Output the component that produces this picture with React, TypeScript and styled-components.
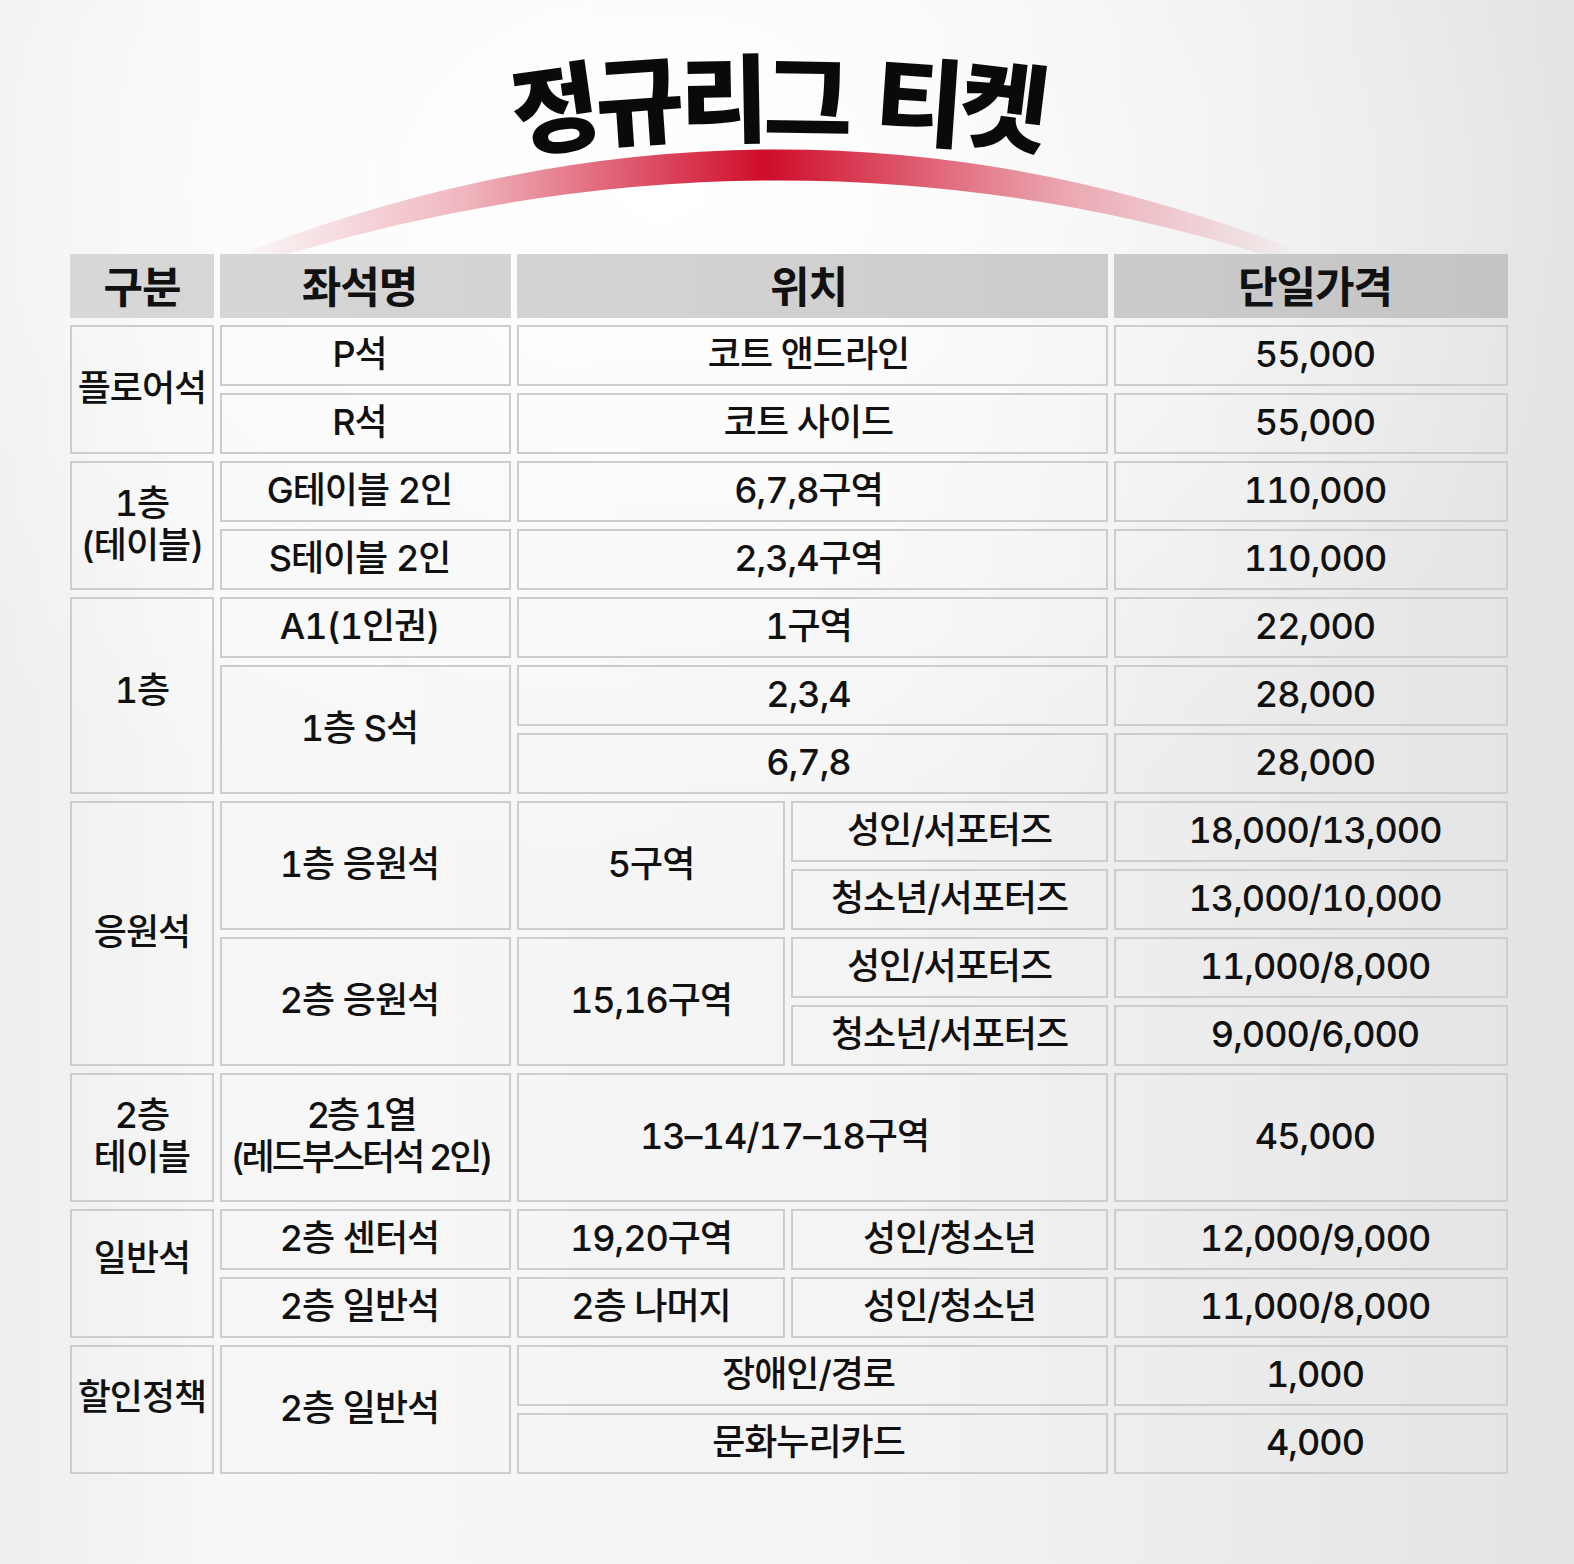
import React from "react";
import styled, { createGlobalStyle } from "styled-components";

const GlobalStyle = createGlobalStyle`
  html, body {
    margin: 0;
    padding: 0;
  }
  body {
    font-family: Inter, "Noto Sans CJK KR", sans-serif;
    color: #111;
  }
`;

const Page = styled.div`
  width: 1574px;
  min-height: 1564px;
  box-sizing: border-box;
  padding-bottom: 90px;
  background:
    radial-gradient(ellipse 60% 45% at 42% 12%, #ffffff 0%, rgba(255, 255, 255, 0) 100%),
    linear-gradient(90deg, #eeeeee 0%, #f7f7f7 14%, #f4f4f4 55%, #e3e3e3 100%);
`;

const Hero = styled.header`
  position: relative;
  height: 254px;
  display: flex;
  justify-content: center;
  padding-right: 18px;
  box-sizing: border-box;
`;

const Arc = styled.svg`
  position: absolute;
  left: 0;
  top: 0;
  width: 1574px;
  height: 254px;
`;

const Title = styled.h1`
  position: relative;
  margin: 46px 0 0;
  display: flex;
  align-items: flex-start;
  font-family: "Noto Sans CJK KR", sans-serif;
  font-size: 96px;
  font-weight: 900;
  line-height: 1;
  letter-spacing: -4px;
  color: #0a0a0a;
`;

const TitleChar = styled.span<{ $rot: number; $dy: number }>`
  display: inline-block;
  transform: translateY(${(p) => p.$dy}px) rotate(${(p) => p.$rot}deg);
`;

const Gap = styled.span`
  display: inline-block;
  width: 28px;
`;

const Table = styled.div`
  margin-left: 70px;
  display: grid;
  grid-template-columns: 144px 291px 268px 317px 394px;
  grid-template-rows: 64px repeat(17, 61px);
  column-gap: 6px;
  row-gap: 7px;
`;

// ref text sits a little off-centre in some columns
const nudge = (c: string, pr?: number) => {
  if (pr) return `padding-right: ${pr}px;`;
  if (c === "2") return "padding-right: 12px;";
  if (c === "3 / 5") return "padding-right: 8px;";
  if (c === "5") return "padding-left: 8px;";
  return "";
};

const Cell = styled.div<{ $c: string; $r: string; $shift?: number; $pr?: number; $tight?: boolean }>`
  grid-column: ${(p) => p.$c};
  grid-row: ${(p) => p.$r};
  box-sizing: border-box;
  border: 2px solid #cdcdcd;
  display: flex;
  align-items: center;
  justify-content: center;
  text-align: center;
  white-space: pre;
  font-size: 36px;
  font-weight: 500;
  line-height: 42px;
  letter-spacing: ${(p) => (p.$tight ? "-3px" : "-1px")};
  font-feature-settings: "tnum" 1;
  padding-bottom: ${(p) => (p.$shift ? `${p.$shift}px` : "4px")};
  ${(p) => nudge(p.$c, p.$pr)}
`;

const HeadCell = styled.div<{ $c: string }>`
  grid-column: ${(p) => p.$c};
  grid-row: 1;
  display: flex;
  align-items: center;
  justify-content: center;
  font-size: 43px;
  font-weight: 700;
  letter-spacing: -1px;
  padding-bottom: 4px;
  background: linear-gradient(90deg, #d8d8d8 0%, #d1d1d1 50%, #c3c3c3 100%);
  background-attachment: fixed;
  ${(p) => nudge(p.$c)}
`;

type Row = { c: string; r: string; t: string; shift?: number; pr?: number; tight?: boolean };

const rows: Row[] = [
  { c: "1", r: "2 / span 2", t: "플로어석" },
  { c: "2", r: "2", t: "P석" },
  { c: "3 / 5", r: "2", t: "코트 앤드라인" },
  { c: "5", r: "2", t: "55,000" },
  { c: "2", r: "3", t: "R석" },
  { c: "3 / 5", r: "3", t: "코트 사이드" },
  { c: "5", r: "3", t: "55,000" },

  { c: "1", r: "4 / span 2", t: "1층\n(테이블)" },
  { c: "2", r: "4", t: "G테이블 2인" },
  { c: "3 / 5", r: "4", t: "6,7,8구역" },
  { c: "5", r: "4", t: "110,000" },
  { c: "2", r: "5", t: "S테이블 2인" },
  { c: "3 / 5", r: "5", t: "2,3,4구역" },
  { c: "5", r: "5", t: "110,000" },

  { c: "1", r: "6 / span 3", t: "1층", shift: 12 },
  { c: "2", r: "6", t: "A1(1인권)" },
  { c: "3 / 5", r: "6", t: "1구역" },
  { c: "5", r: "6", t: "22,000" },
  { c: "2", r: "7 / span 2", t: "1층 S석" },
  { c: "3 / 5", r: "7", t: "2,3,4" },
  { c: "5", r: "7", t: "28,000" },
  { c: "3 / 5", r: "8", t: "6,7,8" },
  { c: "5", r: "8", t: "28,000" },

  { c: "1", r: "9 / span 4", t: "응원석" },
  { c: "2", r: "9 / span 2", t: "1층 응원석" },
  { c: "3", r: "9 / span 2", t: "5구역" },
  { c: "4", r: "9", t: "성인/서포터즈" },
  { c: "5", r: "9", t: "18,000/13,000" },
  { c: "4", r: "10", t: "청소년/서포터즈" },
  { c: "5", r: "10", t: "13,000/10,000" },
  { c: "2", r: "11 / span 2", t: "2층 응원석" },
  { c: "3", r: "11 / span 2", t: "15,16구역" },
  { c: "4", r: "11", t: "성인/서포터즈" },
  { c: "5", r: "11", t: "11,000/8,000" },
  { c: "4", r: "12", t: "청소년/서포터즈" },
  { c: "5", r: "12", t: "9,000/6,000" },

  { c: "1", r: "13 / span 2", t: "2층\n테이블" },
  { c: "2", r: "13 / span 2", t: "2층 1열\n(레드부스터석 2인)", tight: true, pr: 10 },
  { c: "3 / 5", r: "13 / span 2", t: "13–14/17–18구역", pr: 56 },
  { c: "5", r: "13 / span 2", t: "45,000" },

  { c: "1", r: "15 / span 2", t: "일반석", shift: 32 },
  { c: "2", r: "15", t: "2층 센터석" },
  { c: "3", r: "15", t: "19,20구역" },
  { c: "4", r: "15", t: "성인/청소년" },
  { c: "5", r: "15", t: "12,000/9,000" },
  { c: "2", r: "16", t: "2층 일반석" },
  { c: "3", r: "16", t: "2층 나머지" },
  { c: "4", r: "16", t: "성인/청소년" },
  { c: "5", r: "16", t: "11,000/8,000" },

  { c: "1", r: "17 / span 2", t: "할인정책", shift: 26 },
  { c: "2", r: "17 / span 2", t: "2층 일반석" },
  { c: "3 / 5", r: "17", t: "장애인/경로" },
  { c: "5", r: "17", t: "1,000" },
  { c: "3 / 5", r: "18", t: "문화누리카드" },
  { c: "5", r: "18", t: "4,000" },
];

const titleChars = [
  { ch: "정", rot: -8, dy: 10 },
  { ch: "규", rot: -4, dy: 2 },
  { ch: "리", rot: -1, dy: 0 },
  { ch: "그", rot: 1, dy: 0 },
  { ch: " ", rot: 0, dy: 0 },
  { ch: "티", rot: 4, dy: 3 },
  { ch: "켓", rot: 7, dy: 7 },
];

const App: React.FC = () => {
  return (
    <Page>
      <GlobalStyle />
      <Hero>
        <Arc viewBox="0 0 1574 254">
          <defs>
            <linearGradient id="arcFade" gradientUnits="userSpaceOnUse" x1="230" y1="0" x2="1300" y2="0">
              <stop offset="0" stopColor="#d0102c" stopOpacity="0" />
              <stop offset="0.22" stopColor="#d0102c" stopOpacity="0.3" />
              <stop offset="0.5" stopColor="#cf0c2a" stopOpacity="1" />
              <stop offset="0.78" stopColor="#d0102c" stopOpacity="0.35" />
              <stop offset="1" stopColor="#d0102c" stopOpacity="0" />
            </linearGradient>
          </defs>
          <path
            d="M 236 256 Q 775 46 1296 250 L 1288 262 Q 775 96 242 268 Z"
            fill="url(#arcFade)"
          />
        </Arc>
        <Title>
          {titleChars.map((c, i) =>
            c.ch === " " ? (
              <Gap key={i} />
            ) : (
              <TitleChar key={i} $rot={c.rot} $dy={c.dy}>
                {c.ch}
              </TitleChar>
            )
          )}
        </Title>
      </Hero>

      <Table>
        <HeadCell $c="1">구분</HeadCell>
        <HeadCell $c="2">좌석명</HeadCell>
        <HeadCell $c="3 / 5">위치</HeadCell>
        <HeadCell $c="5">단일가격</HeadCell>
        {rows.map((row, i) => (
          <Cell key={i} $c={row.c} $r={row.r} $shift={row.shift} $pr={row.pr} $tight={row.tight}>
            {row.t}
          </Cell>
        ))}
      </Table>
    </Page>
  );
};

export default App;
